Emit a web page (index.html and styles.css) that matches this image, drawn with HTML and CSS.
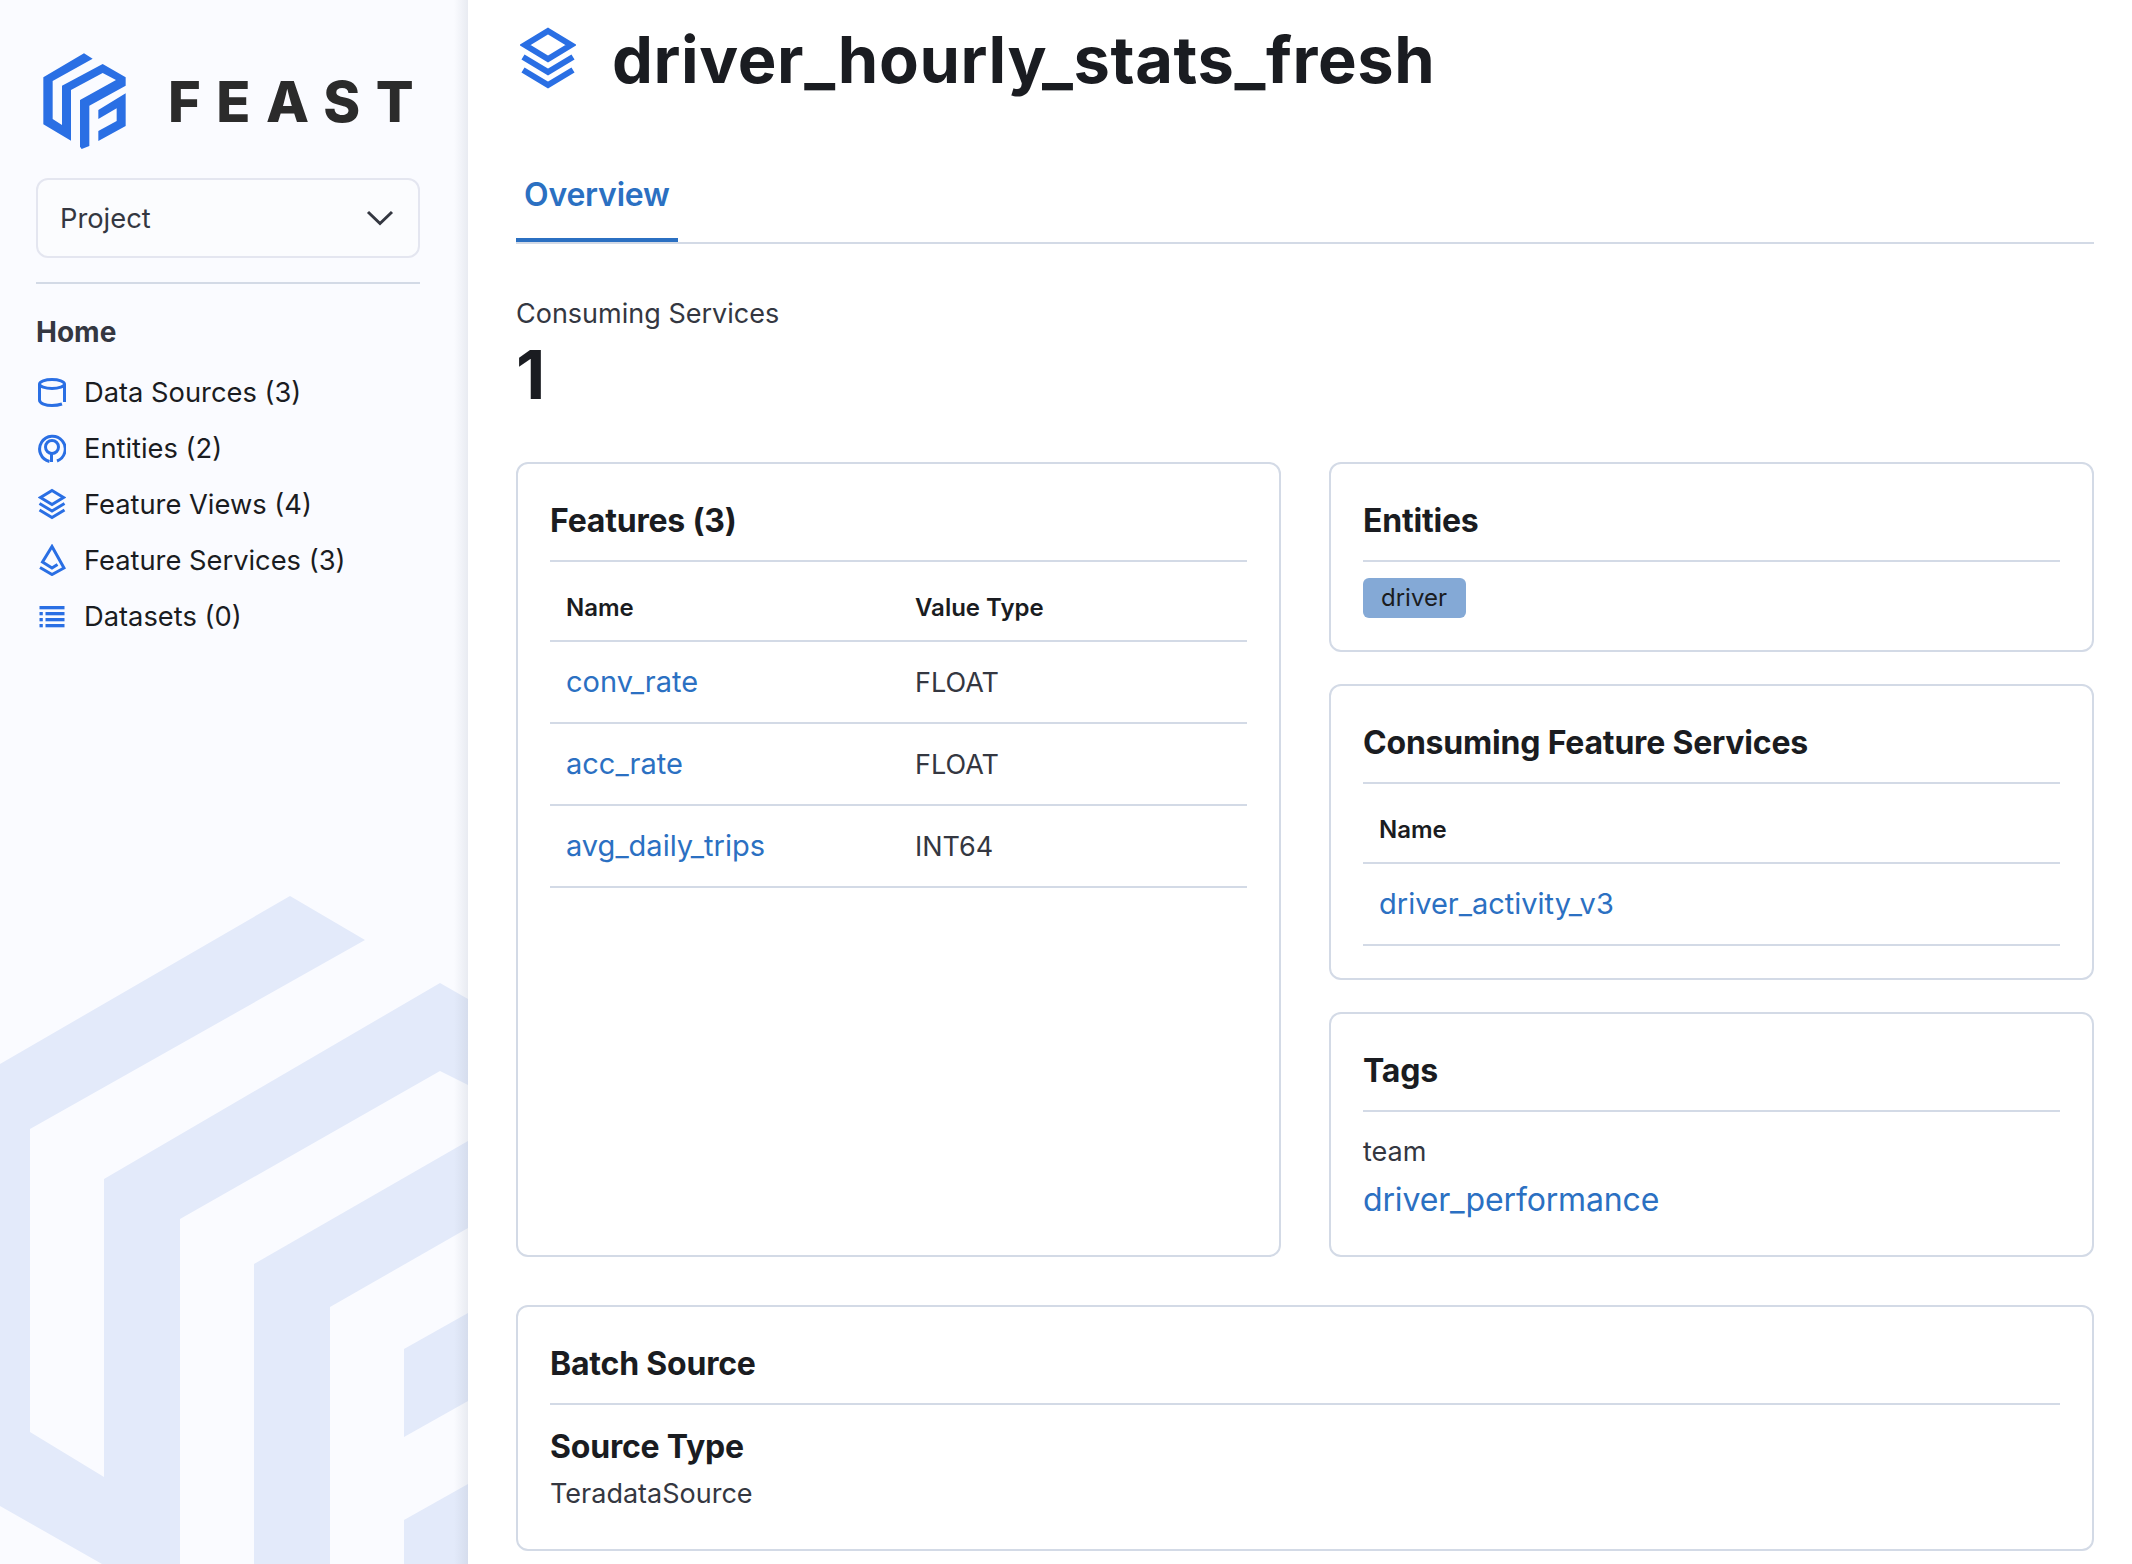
FILE: index.html
```html
<!DOCTYPE html>
<html lang="en">
<head>
  <meta charset="UTF-8">
  <title>Feast - driver_hourly_stats_fresh</title>
  <link rel="stylesheet" href="styles.css">
</head>
<body>
  <div class="app">

    <!-- Sidebar -->
    <aside class="sidebar">
      <svg class="watermark" viewBox="0 0 468 1564" aria-hidden="true">
        <path d="M0 1064L290 896L365 940L30 1129V1432L104 1477V1179L440 983L468 999V1085L440 1071L180 1219V1564H102L0 1506Z"/>
        <path d="M254 1264L468 1141V1228L330 1307V1564H254Z"/>
        <path d="M404 1349L468 1313V1401L404 1437Z"/>
        <path d="M404 1520L468 1484V1564H404Z"/>
      </svg>

      <div class="brand">
        <svg class="brand-mark" viewBox="0 0 330 330" aria-hidden="true">
          <path d="M40 97L162 25L188 41L68 108V222L96 240V122L218 57L287 97V122L178 182V303L155 312L150 305V165L258 105L218 84L123 135V287L40 238Z"/>
          <path d="M205 195L287 145V243L205 288V258L260 228V190L205 222Z"/>
        </svg>
        <span class="brand-name">FEAST</span>
      </div>

      <div class="project-select">
        <span>Project</span>
        <svg width="28" height="16" viewBox="0 0 28 16" aria-hidden="true"><path d="M2 2L14 13.500L26 2"/></svg>
      </div>

      <hr class="side-rule">

      <div class="nav-title">Home</div>
      <ul class="nav">
        <li>
          <svg class="nav-icon" viewBox="0 0 28 32"><ellipse cx="14" cy="8" rx="12.500" ry="4.500"/><path d="M1.500 8V24C1.500 27.500 8 29.500 14 29.500C18 29.500 21 29 24 28M26.500 8V26"/></svg>
          Data Sources (3)
        </li>
        <li>
          <svg class="nav-icon" viewBox="0 0 28 32"><path d="M11.500 29.500A12.800 12.800 0 1 1 19 29"/><circle cx="14" cy="15" r="6.500"/><path d="M13.500 21V30"/></svg>
          Entities (2)
        </li>
        <li>
          <svg class="nav-icon" viewBox="0 0 28 32"><path d="M14 2.500L25.500 9.500L14 16.500L2.500 9.500Z"/><path d="M1.500 15.500L14 23L26.500 15.500M1.500 22L14 29.500L26.500 22"/></svg>
          Feature Views (4)
        </li>
        <li>
          <svg class="nav-icon" viewBox="0 0 28 32"><path d="M19.500 20.500L14 24L4.500 18L14 2.500L26 24L14 30.500L2 23.500"/></svg>
          Feature Services (3)
        </li>
        <li>
          <svg class="nav-icon nav-icon-fill" viewBox="0 0 28 32"><rect x="1.500" y="6" width="25" height="3.300"/><rect x="1.500" y="12" width="3.300" height="3.300"/><rect x="7.500" y="12" width="19" height="3.300"/><rect x="1.500" y="18" width="3.300" height="3.300"/><rect x="7.500" y="18" width="19" height="3.300"/><rect x="1.500" y="24" width="3.300" height="3.300"/><rect x="7.500" y="24" width="19" height="3.300"/></svg>
          Datasets (0)
        </li>
      </ul>
    </aside>

    <!-- Main content -->
    <main class="main">
      <header class="page-head">
        <svg class="page-icon" viewBox="0 0 28 32" aria-hidden="true"><path d="M14 2.500L25.500 9.500L14 16.500L2.500 9.500Z"/><path d="M1.500 15.500L14 23L26.500 15.500M1.500 22L14 29.500L26.500 22"/></svg>
        <h1>driver_hourly_stats_fresh</h1>
      </header>

      <nav class="tabs">
        <a class="tab">Overview</a>
      </nav>

      <section class="stat">
        <div class="stat-label">Consuming Services</div>
        <div class="stat-value">1</div>
      </section>

      <div class="columns">
        <section class="card">
          <h2>Features (3)</h2>
          <table class="table">
            <thead>
              <tr><th class="col-name">Name</th><th>Value Type</th></tr>
            </thead>
            <tbody>
              <tr><td><a>conv_rate</a></td><td>FLOAT</td></tr>
              <tr><td><a>acc_rate</a></td><td>FLOAT</td></tr>
              <tr><td><a>avg_daily_trips</a></td><td>INT64</td></tr>
            </tbody>
          </table>
        </section>

        <div class="stack">
          <section class="card card-entities">
            <h2>Entities</h2>
            <span class="badge">driver</span>
          </section>

          <section class="card card-services">
            <h2>Consuming Feature Services</h2>
            <table class="table">
              <thead>
                <tr><th>Name</th></tr>
              </thead>
              <tbody>
                <tr><td><a>driver_activity_v3</a></td></tr>
              </tbody>
            </table>
          </section>

          <section class="card card-tags">
            <h2>Tags</h2>
            <div class="tag-key">team</div>
            <a class="tag-value">driver_performance</a>
          </section>
        </div>
      </div>

      <section class="card card-batch">
        <h2>Batch Source</h2>
        <h3>Source Type</h3>
        <div class="source-value">TeradataSource</div>
      </section>
    </main>

  </div>
</body>
</html>
```

FILE: styles.css
```css
html, body {
  height: 100%;
  margin: 0;
  overflow: hidden;
}

body {
  background-color: #fff;
  color: #1a1c21;
  font-family: Inter, "Liberation Sans", sans-serif;
  font-size: 27px;
}

a {
  color: #2b70c2;
  text-decoration: none;
}

.app {
  display: flex;
  height: 1564px;
}

/* Sidebar */
.sidebar {
  position: relative;
  flex: 0 0 468px;
  box-sizing: border-box;
  height: 100%;
  padding: 0 48px 0 36px;
  overflow: hidden;
  background-color: #fafbff;
}

.sidebar::after {
  content: "";
  position: absolute;
  top: 0;
  right: 0;
  bottom: 0;
  width: 14px;
  background: linear-gradient(to right, rgba(152, 162, 179, 0), rgba(152, 162, 179, 0.18));
}

.watermark {
  position: absolute;
  top: 0;
  left: 0;
  width: 468px;
  height: 1564px;
  fill: #e3eafa;
}

.brand,
.project-select,
.side-rule,
.nav-title,
.nav {
  position: relative;
}

.brand {
  display: flex;
  align-items: center;
  height: 110px;
  margin: 45px 0 23px -6px;
}

.brand-mark {
  flex: none;
  width: 110px;
  height: 110px;
  fill: #2a6fe4;
}

.brand-name {
  flex: none;
  margin-left: 28px;
  padding-top: 3px;
  color: #2b2b2b;
  font-size: 56px;
  font-weight: 800;
  line-height: 64px;
  letter-spacing: 15.500px;
}

.project-select {
  display: flex;
  align-items: center;
  justify-content: space-between;
  box-sizing: border-box;
  height: 80px;
  padding: 0 24px 0 22px;
  border: 2px solid #e4e6f0;
  border-radius: 12px;
  background-color: #fbfcfe;
  color: #343741;
  font-size: 27.300px;
}

.project-select svg {
  fill: none;
  stroke: #343741;
  stroke-width: 3;
}

.side-rule {
  height: 2px;
  margin: 24px 0 0;
  border: 0;
  background-color: #d3dae6;
}

.nav-title {
  margin-top: 31px;
  color: #343741;
  font-size: 28px;
  font-weight: 700;
  line-height: 34px;
}

.nav {
  margin: 15px 0 0;
  padding: 0;
  font-size: 27.300px;
  list-style: none;
}

.nav li {
  display: flex;
  align-items: center;
  gap: 18px;
  height: 56px;
  padding-left: 2px;
}

.nav-icon {
  flex: none;
  width: 28px;
  height: 32px;
  fill: none;
  stroke: #2a6fe4;
  stroke-width: 3;
}

.nav-icon-fill {
  fill: #2a6fe4;
  stroke: none;
}

/* Main */
.main {
  flex: 1;
  min-width: 0;
  padding: 0 38px 0 48px;
}

.page-head {
  display: flex;
  align-items: center;
  gap: 36px;
  height: 120px;
  padding-left: 4px;
}

.page-icon {
  flex: none;
  width: 56px;
  height: 64px;
  margin-top: -4px;
  fill: none;
  stroke: #2a6fe4;
  stroke-width: 3;
}

.page-head h1 {
  margin: 0;
  font-size: 65px;
  font-weight: 700;
  line-height: 80px;
  letter-spacing: 0.6px;
}

.tabs {
  display: flex;
  height: 124px;
  box-sizing: border-box;
  padding-top: 50px;
  border-bottom: 2px solid #d3dae6;
}

.tab {
  box-sizing: border-box;
  height: 72px;
  padding: 0 8px;
  border-bottom: 4px solid #2b70c2;
  font-size: 32px;
  font-weight: 600;
  line-height: 50px;
  letter-spacing: -0.2px;
}

.stat {
  height: 218px;
  box-sizing: border-box;
  padding-top: 52px;
}

.stat-label {
  color: #343741;
  line-height: 36px;
}

.stat-value {
  margin-top: 4px;
  font-size: 68px;
  font-weight: 700;
  line-height: 76px;
}

.columns {
  display: grid;
  grid-template-columns: 765px 765px;
  gap: 48px;
  height: 795px;
}

.stack {
  display: flex;
  flex-direction: column;
  gap: 32px;
}

.card {
  box-sizing: border-box;
  padding: 0 32px;
  border: 2px solid #d3dae6;
  border-radius: 12px;
  background-color: #fff;
}

.card h2 {
  height: 59px;
  margin: 0;
  padding-top: 37px;
  box-sizing: content-box;
  border-bottom: 2px solid #d3dae6;
  font-size: 32px;
  font-weight: 650;
  line-height: 40px;
  letter-spacing: -0.2px;
}

.table {
  width: 100%;
  border-collapse: collapse;
}

.table th {
  height: 66px;
  padding: 12px 16px 0;
  border-bottom: 2px solid #d3dae6;
  font-size: 24px;
  font-weight: 600;
  text-align: left;
}

.table th.col-name {
  width: 317px;
}

.table td {
  height: 80px;
  padding: 0 16px;
  border-bottom: 2px solid #d3dae6;
  color: #343741;
}

.table td a {
  display: block;
  padding-bottom: 2px;
  font-size: 29px;
}

.card-entities {
  height: 190px;
}

.badge {
  display: inline-block;
  margin-top: 16px;
  padding: 0 19px 0 18px;
  border-radius: 6px;
  background-color: #84a9d6;
  font-size: 24px;
  line-height: 40px;
}

.card-services {
  height: 296px;
}

.card-tags {
  height: 245px;
}

.tag-key {
  margin-top: 22px;
  color: #343741;
  line-height: 36px;
}

.tag-value {
  display: block;
  margin-top: 8px;
  font-size: 32px;
  line-height: 44px;
  letter-spacing: -0.15px;
}

.card-batch {
  height: 246px;
  margin-top: 48px;
}

.card-batch h3 {
  margin: 22px 0 0;
  font-size: 32px;
  font-weight: 650;
  line-height: 40px;
  letter-spacing: -0.2px;
}

.source-value {
  margin-top: 9px;
  color: #343741;
  line-height: 36px;
}
```
